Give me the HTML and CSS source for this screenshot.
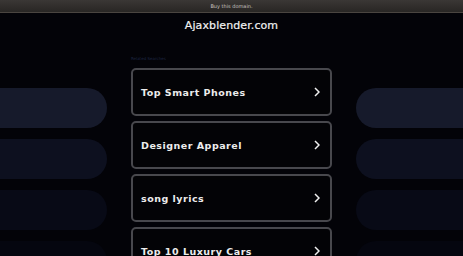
FILE: index.html
```html
<!DOCTYPE html>
<html lang="en">
<head>
    <meta charset="UTF-8">
    <meta name="viewport" content="width=device-width, initial-scale=1.0">
    <title>Ajaxblender.com</title>
    <link rel="stylesheet" href="styles.css">
</head>
<body>

<div class="topbar">Buy this domain.</div>

<h1 class="domain">Ajaxblender.com</h1>

<div class="layout">
    <div class="pills">
        <div class="pill p1"></div>
        <div class="pill p2"></div>
        <div class="pill p3"></div>
        <div class="pill p4"></div>
    </div>

    <div class="searches">
        <div class="searches-label">Related Searches</div>
        <a class="search-card" href="#">
            <span>Top Smart Phones</span>
            <svg class="chevron" viewBox="0 0 6 10"><path d="M1 1 L5 5 L1 9"/></svg>
        </a>
        <a class="search-card" href="#">
            <span>Designer Apparel</span>
            <svg class="chevron" viewBox="0 0 6 10"><path d="M1 1 L5 5 L1 9"/></svg>
        </a>
        <a class="search-card" href="#">
            <span>song lyrics</span>
            <svg class="chevron" viewBox="0 0 6 10"><path d="M1 1 L5 5 L1 9"/></svg>
        </a>
        <a class="search-card" href="#">
            <span>Top 10 Luxury Cars</span>
            <svg class="chevron" viewBox="0 0 6 10"><path d="M1 1 L5 5 L1 9"/></svg>
        </a>
    </div>

    <div class="pills right">
        <div class="pill p1"></div>
        <div class="pill p2"></div>
        <div class="pill p3"></div>
        <div class="pill p4"></div>
    </div>
</div>

</body>
</html>
```

FILE: styles.css
```css
body {
    margin: 0;
    padding: 0;
    background-color: #030308;
    font-family: "DejaVu Sans", Verdana, sans-serif;
    color: #fff;
    overflow: hidden;
    height: 256px;
}

.topbar {
    height: 12px;
    line-height: 12px;
    text-align: center;
    font-size: 5px;
    color: #c8c4c0;
    background: linear-gradient(#3a3735, #282624);
    border-bottom: 1px solid #4a4540;
}

.domain {
    margin: 0;
    padding-top: 4px;
    height: 36px;
    text-align: center;
    font-size: 11px;
    font-weight: normal;
    letter-spacing: 0.1px;
    line-height: 17px;
    color: #f2f2f2;
    -webkit-text-stroke: 0.2px #f2f2f2;
}

.layout {
    display: grid;
    grid-template-columns: 107px 201px 107px;
    column-gap: 24px;
    margin-top: 2px;
}

.pills {
    display: flex;
    flex-direction: column;
    gap: 11px;
    padding-top: 33px;
}

.pill {
    height: 40px;
    border-radius: 0 20px 20px 0;
}

.right .pill {
    border-radius: 20px 0 0 20px;
}

.p1 { background-color: #161a2b; }
.p2 { background-color: #0d101f; }
.p3 { background-color: #080a16; }
.p4 { background-color: #05060f; }

.searches {
    display: flex;
    flex-direction: column;
    gap: 5px;
}

.searches-label {
    font-size: 4px;
    height: 8px;
    line-height: 8px;
    color: #1e2642;
}

.search-card {
    display: flex;
    justify-content: space-between;
    align-items: center;
    height: 44px;
    padding: 0 10px 0 8px;
    border: 2px solid #48484d;
    border-radius: 5px;
    background-color: #030306;
    color: #ececec;
    text-decoration: none;
    font-size: 9.5px;
    font-weight: bold;
    letter-spacing: 0.5px;
}

.chevron {
    width: 6px;
    height: 10px;
    fill: none;
    stroke: #f0f0f0;
    stroke-width: 1.5;
}
```
